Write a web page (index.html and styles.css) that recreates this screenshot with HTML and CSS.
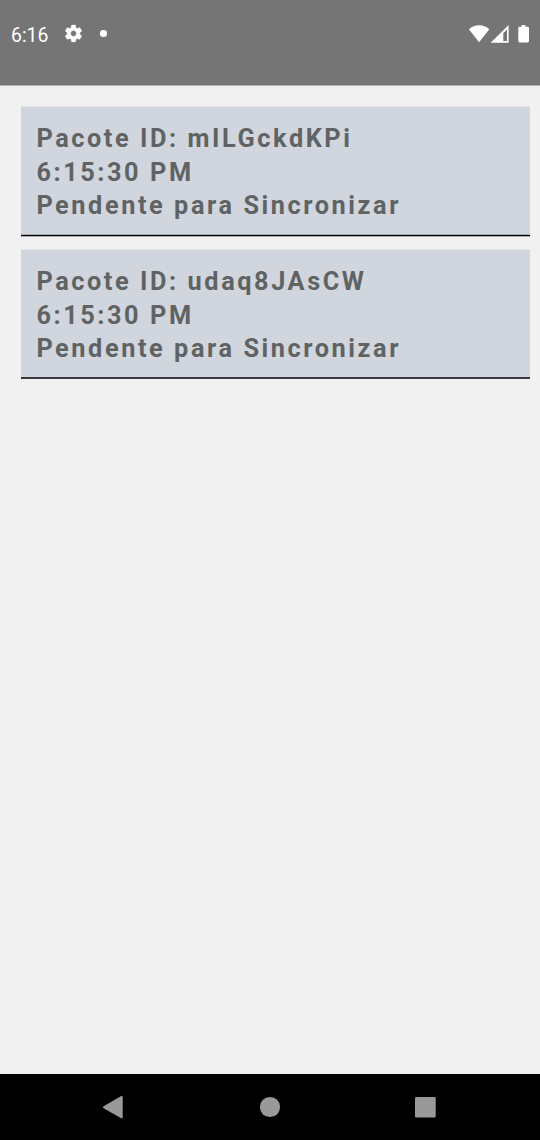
FILE: index.html
```html
<!DOCTYPE html>
<html lang="pt">
<head>
<meta charset="utf-8">
<title>Pacotes</title>
<link rel="stylesheet" href="styles.css">
</head>
<body>
<div class="screen">
  <header class="status-bar">
    <span class="clock">6:16</span>
    <svg class="gear" viewBox="0 0 24 24"><path d="M19.14 12.94c.04-.3.06-.61.06-.94 0-.32-.02-.64-.07-.94l2.03-1.58c.18-.14.23-.41.12-.61l-1.92-3.32c-.12-.22-.37-.29-.59-.22l-2.39.96c-.5-.38-1.03-.7-1.62-.94L14.4 2.81c-.04-.24-.24-.41-.48-.41h-3.84c-.24 0-.43.17-.47.41l-.36 2.54c-.59.24-1.13.57-1.62.94l-2.39-.96c-.22-.08-.47 0-.59.22L2.74 8.87c-.12.21-.08.47.12.61l2.03 1.58c-.05.3-.09.63-.09.94s.02.64.07.94l-2.03 1.58c-.18.14-.23.41-.12.61l1.92 3.32c.12.22.37.29.59.22l2.39-.96c.5.38 1.03.7 1.62.94l.36 2.54c.05.24.24.41.48.41h3.84c.24 0 .44-.17.47-.41l.36-2.54c.59-.24 1.13-.56 1.62-.94l2.39.96c.22.08.47 0 .59-.22l1.92-3.32c.12-.22.07-.47-.12-.61l-2.01-1.58zM12 15.3c-1.82 0-3.3-1.48-3.3-3.3s1.48-3.3 3.3-3.3 3.3 1.48 3.3 3.3-1.48 3.3-3.3 3.3z"/></svg>
    <span class="dot"></span>
    <svg class="signals" viewBox="0 0 62 20">
      <path d="M.9 5.3A15.2 15.2 0 0 1 21.3 5.3L11.1 18.2Z"/>
      <path fill-rule="evenodd" d="M22.7 18.7 40.6 1V18.7ZM35.3 9.3V17.1H39V5.6Z"/>
      <path d="M53.6 1H57.4V2.7H59.6Q61 2.7 61 4.1V17.1Q61 18.5 59.6 18.5H51.7Q50.3 18.5 50.3 17.1V4.1Q50.3 2.7 51.7 2.7H53.6Z"/>
    </svg>
  </header>
  <main class="list">
    <article class="card">
      <p>Pacote ID: mILGckdKPi</p>
      <p>6:15:30 PM</p>
      <p>Pendente para Sincronizar</p>
      <svg class="rule" viewBox="0 0 509 3" preserveAspectRatio="none"><path fill="#a7aaae" d="M0 0H509V3H0Z"/><path fill="#000" d="M0 1H509V2H0Z"/></svg>
    </article>
    <article class="card card-last">
      <p>Pacote ID: udaq8JAsCW</p>
      <p>6:15:30 PM</p>
      <p>Pendente para Sincronizar</p>
      <svg class="rule rule-thin" viewBox="0 0 509 2" preserveAspectRatio="none"><path fill="#36383b" d="M0 0H509V2H0Z"/></svg>
    </article>
  </main>
  <nav class="nav-bar">
    <svg class="nav-icons" viewBox="0 0 540 66">
      <path d="M103.6 32.2 120.8 22.2Q122.7 21.2 122.7 23.2V43.2Q122.7 45.2 120.8 44.1L103.6 34.2Q102 33.2 103.6 32.2Z"/>
      <circle cx="270" cy="33" r="10.1"/>
      <rect x="415" y="23" width="20.7" height="20.6" rx="1.4"/>
    </svg>
  </nav>
</div>
</body>
</html>
```
FILE: styles.css
```css
body {
  margin: 0;
  font-family: Roboto, "Liberation Sans", sans-serif;
}

.screen {
  display: flex;
  flex-direction: column;
  height: 1140px;
  background: #f1f1f1;
}

.status-bar {
  display: flex;
  align-items: flex-start;
  box-sizing: border-box;
  height: 86px;
  padding: 24px 10px 0 11px;
  background: #757575;
  border-bottom: 1px solid #b2b2b2;
  color: #fff;
}

.clock {
  width: 51.5px;
  font-size: 19.4px;
  line-height: 24px;
}

.gear {
  width: 21px;
  height: 21px;
  margin-top: -1px;
  fill: #fff;
  stroke: #fff;
  stroke-width: 0.4;
}

.dot {
  width: 6.4px;
  height: 6.4px;
  margin: 6.3px 0 0 16.8px;
  border-radius: 50%;
  background: #fff;
}

.signals {
  width: 62px;
  height: 20px;
  margin-left: auto;
  fill: #fff;
}

.list {
  display: flex;
  flex: 1;
  flex-direction: column;
  gap: 12px;
  padding: 20px 10px 0 21px;
}

.card {
  display: flex;
  flex-direction: column;
  box-sizing: border-box;
  height: 131px;
  padding-top: 15px;
  background: #d1d5dd;
  border-top: 1px solid #e2e4e6;
}

.card-last {
  height: 130px;
}

.card p {
  margin: 0 0 0 15.4px;
  color: #5f6364;
  font-size: 25.3px;
  font-weight: 700;
  line-height: 33.5px;
  letter-spacing: 2.57px;
  white-space: nowrap;
}

.rule {
  width: 100%;
  height: 3px;
  margin-top: auto;
}

.rule-thin {
  height: 2px;
}

.nav-bar {
  height: 66px;
  background: #000;
}

.nav-icons {
  display: block;
  width: 540px;
  height: 66px;
  fill: #999;
}
```
